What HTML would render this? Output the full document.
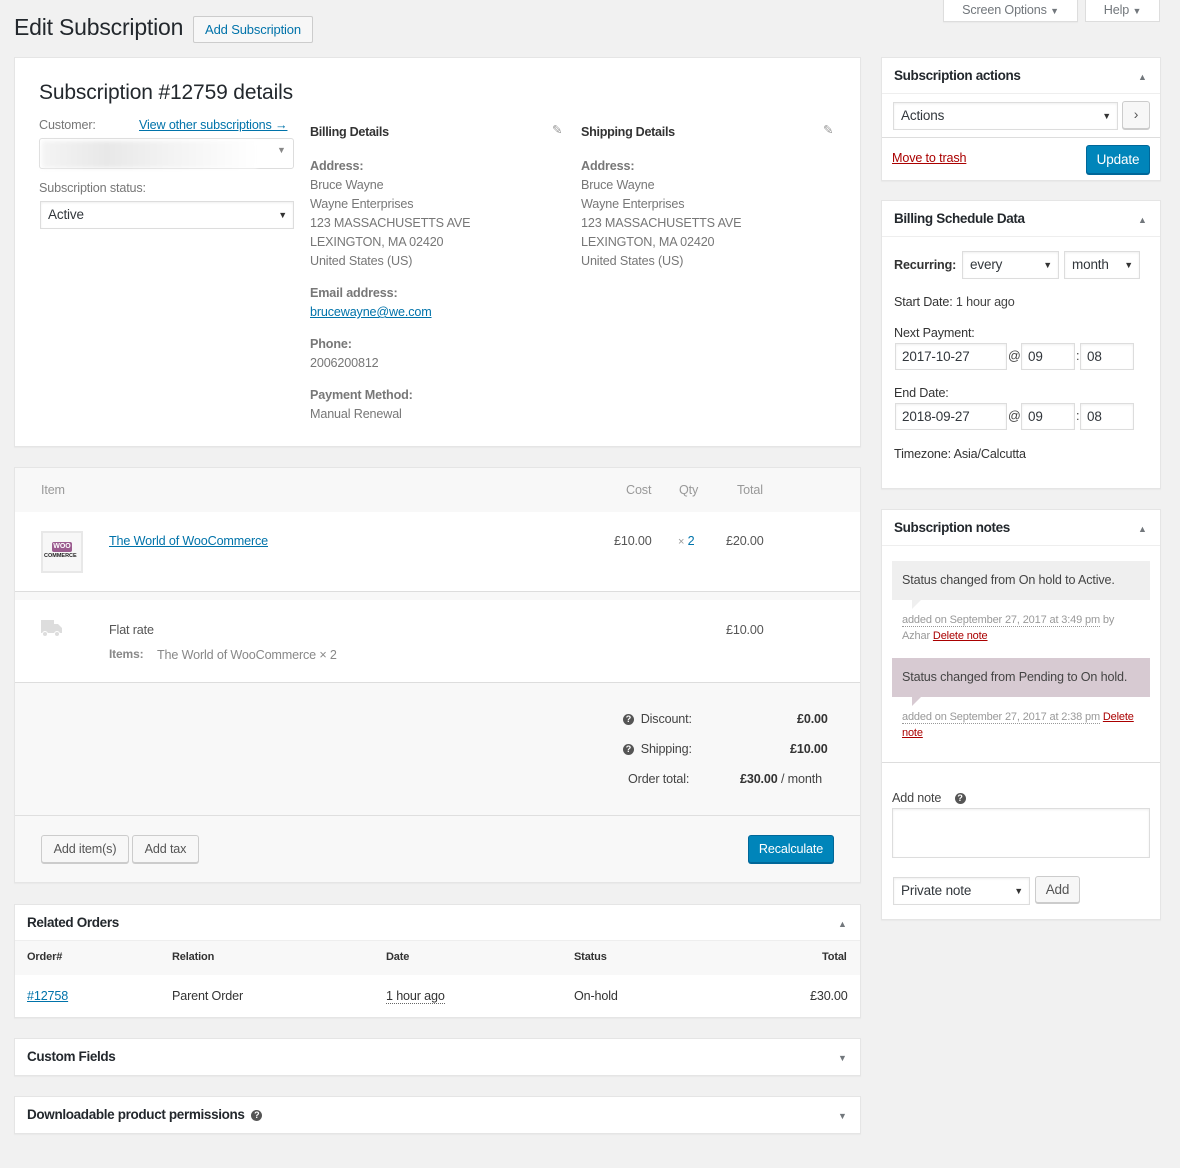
<!DOCTYPE html>
<html><head><meta charset="utf-8"><style>
*{box-sizing:border-box;margin:0;padding:0}
body{width:1180px;height:1168px;background:#f1f1f1;font-family:"Liberation Sans",sans-serif;font-size:12.6px;letter-spacing:-0.15px;color:#444;position:relative;overflow:hidden}
.a{position:absolute;white-space:nowrap}
.box{position:absolute;background:#fff;border:1px solid #e5e5e5;box-shadow:0 1px 1px rgba(0,0,0,.04)}
.lnk{color:#0073aa;text-decoration:underline}
.sel{position:absolute;background:#fff;border:1px solid #ddd;box-shadow:inset 0 1px 2px rgba(0,0,0,.07);color:#32373c;font-size:13.5px;padding-left:7px;line-height:26px}
.sel:after{content:"▼";position:absolute;right:6px;top:0;font-size:9px;color:#333}
.inp{position:absolute;background:#fff;border:1px solid #ddd;box-shadow:inset 0 1px 2px rgba(0,0,0,.07);color:#32373c;font-size:13.5px;padding-left:6px;line-height:26px}
.btn{position:absolute;background:#f7f7f7;border:1px solid #ccc;border-radius:3px;box-shadow:0 1px 0 #ccc;color:#555;font-size:12.6px;text-align:center}
.bp{position:absolute;background:#0085ba;border:1px solid #006799;border-radius:3px;box-shadow:0 1px 0 #006799;color:#fff;font-size:12.6px;text-align:center}
.h{font-weight:bold;color:#23282d;font-size:13.5px;letter-spacing:-0.35px}
.tri{position:absolute;font-size:9px;color:#72777c}
.hr{position:absolute;height:1px;background:#eee}
.q{display:inline-block;width:11px;height:11px;border-radius:50%;background:#555;color:#fff;font-size:9px;font-weight:bold;text-align:center;line-height:11px;vertical-align:middle;letter-spacing:0}
</style></head><body>

<div class="a" style="left:14px;top:14px;font-size:23px;color:#23282d;letter-spacing:-0.2px">Edit Subscription</div>
<div class="a" style="left:193px;top:16px;width:120px;height:27px;border:1px solid #ccc;background:#f7f7f7;border-radius:2px;color:#0073aa;font-size:13px;line-height:25px;text-align:center">Add Subscription</div>
<div class="a" style="left:943px;top:-1px;width:135px;height:23px;background:#fff;border:1px solid #ddd;box-shadow:0 1px 1px rgba(0,0,0,.04);color:#72777c;line-height:20px;text-align:center">Screen Options <span style="font-size:9px">▼</span></div>
<div class="a" style="left:1085px;top:-1px;width:75px;height:23px;background:#fff;border:1px solid #ddd;color:#72777c;line-height:20px;text-align:center">Help <span style="font-size:9px">▼</span></div>

<div class="box" style="left:14px;top:57px;width:847px;height:390px"></div>
<div class="a" style="left:39px;top:81px;font-size:21px;color:#23282d">Subscription #12759 details</div>
<div class="a" style="left:39px;top:118px;color:#777">Customer:</div>
<div class="a lnk" style="left:139px;top:118px">View other subscriptions →</div>
<div class="a" style="left:39px;top:138px;width:255px;height:31px;border:1px solid #ddd;border-radius:3px;background:#fff"></div>
<div class="a" style="left:42px;top:141px;width:215px;height:27px;background:linear-gradient(90deg,#f4f4f4,#e8e8e8 30%,#f3f3f3 60%,#fff);filter:blur(2px)"></div>
<div class="a" style="left:277px;top:145px;font-size:9px;color:#888">▼</div>
<div class="a" style="left:39px;top:181px;color:#777">Subscription status:</div>
<div class="sel" style="left:40px;top:201px;width:254px;height:28px">Active</div>

<div class="a" style="left:310px;top:125px;font-weight:bold;color:#333;letter-spacing:-0.3px">Billing Details</div>
<div class="a" style="left:552px;top:122px;color:#999">✎</div>
<div class="a" style="left:310px;top:157px;line-height:19px;color:#777"><b>Address:</b><br>Bruce Wayne<br>Wayne Enterprises<br>123 MASSACHUSETTS AVE<br>LEXINGTON, MA 02420<br>United States (US)</div>
<div class="a" style="left:310px;top:284px;line-height:19px;color:#777"><b>Email address:</b><br><span class="lnk">brucewayne@we.com</span></div>
<div class="a" style="left:310px;top:335px;line-height:19px;color:#777"><b>Phone:</b><br>2006200812</div>
<div class="a" style="left:310px;top:386px;line-height:19px;color:#777"><b>Payment Method:</b><br>Manual Renewal</div>

<div class="a" style="left:581px;top:125px;font-weight:bold;color:#333;letter-spacing:-0.3px">Shipping Details</div>
<div class="a" style="left:823px;top:122px;color:#999">✎</div>
<div class="a" style="left:581px;top:157px;line-height:19px;color:#777"><b>Address:</b><br>Bruce Wayne<br>Wayne Enterprises<br>123 MASSACHUSETTS AVE<br>LEXINGTON, MA 02420<br>United States (US)</div>

<div class="box" style="left:14px;top:467px;width:847px;height:416px;background:#f8f8f8"></div>
<div class="a" style="left:41px;top:483px;color:#999">Item</div>
<div class="a" style="left:626px;top:483px;color:#999">Cost</div>
<div class="a" style="left:679px;top:483px;color:#999">Qty</div>
<div class="a" style="left:737px;top:483px;color:#999">Total</div>
<div class="a" style="left:15px;top:512px;width:845px;height:80px;background:#fff;border-bottom:1px solid #ddd"></div>
<div class="a" style="left:41px;top:531px;width:42px;height:42px;background:#f7f7f7;border:2px solid #e8e8e8"></div>
<div class="a" style="left:52px;top:542px;width:20px;height:10px;background:#9b5c8f;border-radius:2px;color:#fff;font-size:7px;font-weight:bold;text-align:center;line-height:10px;letter-spacing:0">WOO</div>
<div class="a" style="left:44px;top:553px;font-size:5.5px;font-weight:bold;color:#222;letter-spacing:0">COMMERCE</div>
<div class="a lnk" style="left:109px;top:534px">The World of WooCommerce</div>
<div class="a" style="left:614px;top:534px;color:#555">£10.00</div>
<div class="a" style="left:678px;top:534px;color:#999"><span style="font-size:11px">×</span> <span style="color:#0073aa">2</span></div>
<div class="a" style="left:726px;top:534px;color:#555">£20.00</div>
<div class="a" style="left:15px;top:600px;width:845px;height:83px;background:#fff;border-bottom:1px solid #ddd"></div>
<svg class="a" style="left:41px;top:620px" width="21" height="17" viewBox="0 0 21 17"><rect x="0" y="0" width="13" height="13" fill="#ddd"/><path d="M13 4h4l4 4v5h-8z" fill="#ddd"/><circle cx="4" cy="14" r="2.5" fill="#ddd" stroke="#fff"/><circle cx="16" cy="14" r="2.5" fill="#ddd" stroke="#fff"/></svg>
<div class="a" style="left:109px;top:623px;color:#555">Flat rate</div>
<div class="a" style="left:109px;top:647px;color:#888;font-size:12px;font-weight:bold">Items:</div>
<div class="a" style="left:157px;top:648px;color:#888">The World of WooCommerce × 2</div>
<div class="a" style="left:726px;top:623px;color:#555">£10.00</div>

<div class="a" style="left:623px;top:712px;color:#444"><span class="q">?</span>&nbsp; Discount:</div>
<div class="a" style="left:797px;top:712px;font-weight:bold;color:#333">£0.00</div>
<div class="a" style="left:623px;top:742px;color:#444"><span class="q">?</span>&nbsp; Shipping:</div>
<div class="a" style="left:790px;top:742px;font-weight:bold;color:#333">£10.00</div>
<div class="a" style="left:628px;top:772px;color:#444">Order total:</div>
<div class="a" style="left:740px;top:772px;color:#444"><b style="color:#333">£30.00</b> / month</div>
<div class="a" style="left:15px;top:815px;width:845px;height:1px;background:#dfdfdf"></div>
<div class="btn" style="left:41px;top:835px;width:88px;height:28px;line-height:26px">Add item(s)</div>
<div class="btn" style="left:132px;top:835px;width:67px;height:28px;line-height:26px">Add tax</div>
<div class="bp" style="left:748px;top:835px;width:86px;height:28px;line-height:26px">Recalculate</div>

<div class="box" style="left:14px;top:904px;width:847px;height:114px"></div>
<div class="a h" style="left:27px;top:915px">Related Orders</div>
<div class="tri" style="left:838px;top:919px">▲</div>
<div class="a" style="left:15px;top:940px;width:845px;height:35px;background:#f8f8f8;border-top:1px solid #eee"></div>
<div class="a" style="left:27px;top:951px;font-size:11px;font-weight:bold;color:#333">Order#</div>
<div class="a" style="left:172px;top:951px;font-size:11px;font-weight:bold;color:#333">Relation</div>
<div class="a" style="left:386px;top:951px;font-size:11px;font-weight:bold;color:#333">Date</div>
<div class="a" style="left:574px;top:951px;font-size:11px;font-weight:bold;color:#333">Status</div>
<div class="a" style="left:822px;top:951px;font-size:11px;font-weight:bold;color:#333">Total</div>
<div class="a lnk" style="left:27px;top:989px">#12758</div>
<div class="a" style="left:172px;top:989px;color:#333">Parent Order</div>
<div class="a" style="left:386px;top:989px;color:#333;border-bottom:1px dotted #666">1 hour ago</div>
<div class="a" style="left:574px;top:989px;color:#333">On-hold</div>
<div class="a" style="left:810px;top:989px;color:#333">£30.00</div>

<div class="box" style="left:14px;top:1038px;width:847px;height:38px"></div>
<div class="a h" style="left:27px;top:1049px">Custom Fields</div>
<div class="tri" style="left:838px;top:1053px">▼</div>
<div class="box" style="left:14px;top:1096px;width:847px;height:38px"></div>
<div class="a h" style="left:27px;top:1107px">Downloadable product permissions &nbsp;<span class="q">?</span></div>
<div class="tri" style="left:838px;top:1111px">▼</div>

<div class="box" style="left:881px;top:57px;width:280px;height:124px"></div>
<div class="a h" style="left:894px;top:68px">Subscription actions</div>
<div class="tri" style="left:1138px;top:72px">▲</div>
<div class="hr" style="left:882px;top:93px;width:278px"></div>
<div class="sel" style="left:893px;top:102px;width:225px;height:28px">Actions</div>
<div class="btn" style="left:1122px;top:101px;width:28px;height:28px;line-height:25px;font-size:14px">›</div>
<div class="hr" style="left:882px;top:137px;width:278px;background:#ddd"></div>
<div class="a" style="left:892px;top:151px;color:#a00;text-decoration:underline">Move to trash</div>
<div class="bp" style="left:1086px;top:145px;width:64px;height:29px;line-height:27px;font-size:13.5px">Update</div>

<div class="box" style="left:881px;top:200px;width:280px;height:289px"></div>
<div class="a h" style="left:894px;top:211px">Billing Schedule Data</div>
<div class="tri" style="left:1138px;top:215px">▲</div>
<div class="hr" style="left:882px;top:236px;width:278px"></div>
<div class="a" style="left:894px;top:258px;font-weight:bold;color:#333">Recurring:</div>
<div class="sel" style="left:962px;top:251px;width:97px;height:28px">every</div>
<div class="sel" style="left:1064px;top:251px;width:76px;height:28px">month</div>
<div class="a" style="left:894px;top:295px;color:#333">Start Date: <span style="color:#444">1 hour ago</span></div>
<div class="a" style="left:894px;top:326px;color:#333">Next Payment:</div>
<div class="inp" style="left:895px;top:343px;width:112px;height:27px">2017-10-27</div>
<div class="a" style="left:1008px;top:349px;color:#444">@</div>
<div class="inp" style="left:1021px;top:343px;width:54px;height:27px">09</div>
<div class="a" style="left:1076px;top:349px">:</div>
<div class="inp" style="left:1080px;top:343px;width:54px;height:27px">08</div>
<div class="a" style="left:894px;top:386px;color:#333">End Date:</div>
<div class="inp" style="left:895px;top:403px;width:112px;height:27px">2018-09-27</div>
<div class="a" style="left:1008px;top:409px;color:#444">@</div>
<div class="inp" style="left:1021px;top:403px;width:54px;height:27px">09</div>
<div class="a" style="left:1076px;top:409px">:</div>
<div class="inp" style="left:1080px;top:403px;width:54px;height:27px">08</div>
<div class="a" style="left:894px;top:447px;color:#333">Timezone: Asia/Calcutta</div>

<div class="box" style="left:881px;top:509px;width:280px;height:411px"></div>
<div class="a h" style="left:894px;top:520px">Subscription notes</div>
<div class="tri" style="left:1138px;top:524px">▲</div>
<div class="hr" style="left:882px;top:545px;width:278px"></div>
<div class="a" style="left:892px;top:561px;width:258px;height:39px;background:#efefef;padding:12px 0 0 10px;color:#444">Status changed from On hold to Active.</div>
<div class="a" style="left:912px;top:600px;width:0;height:0;border-top:9px solid #efefef;border-right:9px solid transparent"></div>
<div class="a" style="left:902px;top:612px;font-size:11px;color:#999;line-height:16px"><span style="border-bottom:1px dotted #999">added on September 27, 2017 at 3:49 pm</span> by<br>Azhar <span style="color:#a00;text-decoration:underline">Delete note</span></div>
<div class="a" style="left:892px;top:658px;width:258px;height:39px;background:#d7cad2;padding:12px 0 0 10px;color:#444">Status changed from Pending to On hold.</div>
<div class="a" style="left:912px;top:697px;width:0;height:0;border-top:9px solid #d7cad2;border-right:9px solid transparent"></div>
<div class="a" style="left:902px;top:709px;font-size:11px;color:#999;line-height:16px"><span style="border-bottom:1px dotted #999">added on September 27, 2017 at 2:38 pm</span> <span style="color:#a00;text-decoration:underline">Delete</span><br><span style="color:#a00;text-decoration:underline">note</span></div>
<div class="hr" style="left:882px;top:762px;width:278px;background:#ddd"></div>
<div class="a" style="left:892px;top:791px;color:#444">Add note &nbsp;&nbsp;&nbsp;<span class="q">?</span></div>
<div class="a" style="left:892px;top:808px;width:258px;height:50px;border:1px solid #ddd;background:#fff;box-shadow:inset 0 1px 2px rgba(0,0,0,.07)"></div>
<div class="sel" style="left:893px;top:877px;width:137px;height:28px">Private note</div>
<div class="btn" style="left:1035px;top:876px;width:45px;height:27px;line-height:25px;font-size:13.5px">Add</div>
</body></html>
